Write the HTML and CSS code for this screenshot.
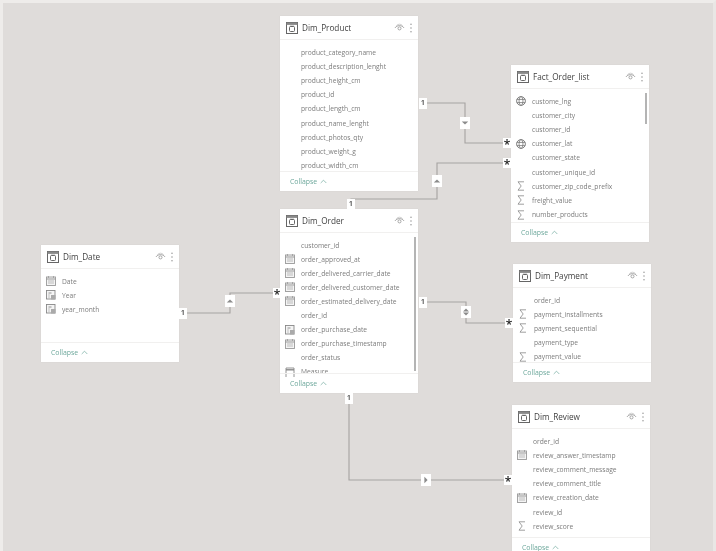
FILE: index.html
```html
<!DOCTYPE html>
<html lang="en">
<head>
<meta charset="utf-8">
<title>Model view</title>
<link rel="stylesheet" href="styles.css">
</head>
<body>
<svg class="defs" width="0" height="0" aria-hidden="true">
  <symbol id="i-table" viewBox="0 0 12 12">
    <rect x="0.5" y="0.5" width="11" height="11" fill="none" stroke="#666" stroke-width="1"/>
    <rect x="0.5" y="0.5" width="11" height="2.4" fill="#888"/>
    <rect x="3.5" y="4.5" width="5" height="5" rx="1" fill="none" stroke="#666" stroke-width="1"/>
    <path d="M5 3.4v1.6M7 3.4v1.6" stroke="#666" stroke-width=".8"/>
  </symbol>
  <symbol id="i-eye" viewBox="0 0 12 10">
    <path d="M1 5.5C3 2 9 2 11 5.5" fill="none" stroke="#888" stroke-width=".8"/>
    <path d="M2.5 3C4.5 0.8 7.5 0.8 9.5 3" fill="none" stroke="#aaa" stroke-width=".6"/>
    <circle cx="6" cy="6" r="1.7" fill="none" stroke="#888" stroke-width=".8"/>
  </symbol>
  <symbol id="i-more" viewBox="0 0 4 12">
    <circle cx="2" cy="1.5" r=".8" fill="#888"/>
    <circle cx="2" cy="6" r=".8" fill="#888"/>
    <circle cx="2" cy="10.5" r=".8" fill="#888"/>
  </symbol>
  <symbol id="i-sum" viewBox="0 0 10 10">
    <path d="M8 .8H2l3.2 4.2L2 9.2h6" fill="none" stroke="#888" stroke-width=".8"/>
  </symbol>
  <symbol id="i-globe" viewBox="0 0 10 10">
    <circle cx="5" cy="5" r="4.4" fill="none" stroke="#777" stroke-width=".9"/>
    <ellipse cx="5" cy="5" rx="2" ry="4.4" fill="none" stroke="#777" stroke-width=".8"/>
    <path d="M.8 3.4h8.4M.8 6.6h8.4" stroke="#777" stroke-width=".8"/>
  </symbol>
  <symbol id="i-cal" viewBox="0 0 10 10">
    <rect x=".5" y="1" width="9" height="8.5" fill="#f4f4f4" stroke="#999" stroke-width=".9"/>
    <path d="M.5 3h9" stroke="#999" stroke-width="1"/>
    <path d="M2.5 0v2M7.5 0v2" stroke="#999" stroke-width=".8"/>
    <path d="M2 5h6M2 7h6" stroke="#bbb" stroke-width="1"/>
  </symbol>
  <symbol id="i-hier" viewBox="0 0 10 10">
    <rect x=".5" y=".5" width="8.5" height="8.5" fill="#f4f4f4" stroke="#888" stroke-width=".9"/>
    <path d="M2.5 3h3M2.5 5h1M2.5 7h1" stroke="#888" stroke-width=".9"/>
    <rect x="5" y="5" width="4.5" height="4.5" fill="#aaa"/>
  </symbol>
  <symbol id="i-measure" viewBox="0 0 10 10">
    <path d="M1 10V1h8v9" fill="none" stroke="#888" stroke-width=".9"/>
    <path d="M1 2.8h8" stroke="#888" stroke-width="1.4"/>
  </symbol>
  <symbol id="i-chev" viewBox="0 0 8 5">
    <path d="M.8 4.2L4 1l3.2 3.2" fill="none" stroke="#6ea89c" stroke-width=".8"/>
  </symbol>
</svg>

<main class="canvas">
  <svg class="links" width="716" height="551" viewBox="0 0 716 551" aria-hidden="true">
    <path d="M423 103H465V143H507"/>
    <path d="M507 163H437V199H351V205"/>
    <path d="M183 313H230V293H277"/>
    <path d="M423 302H466V323H509"/>
    <path d="M349 398V480H508"/>
  </svg>

  <section class="card c-product">
    <header class="head"><svg class="ticon"><use href="#i-table"/></svg><h2>Dim_Product</h2><svg class="eye"><use href="#i-eye"/></svg><svg class="more"><use href="#i-more"/></svg></header>
    <ul class="rows">
      <li><span class="ic"></span>product_category_name</li>
      <li><span class="ic"></span>product_description_lenght</li>
      <li><span class="ic"></span>product_height_cm</li>
      <li><span class="ic"></span>product_id</li>
      <li><span class="ic"></span>product_length_cm</li>
      <li><span class="ic"></span>product_name_lenght</li>
      <li><span class="ic"></span>product_photos_qty</li>
      <li><span class="ic"></span>product_weight_g</li>
      <li><span class="ic"></span>product_width_cm</li>
    </ul>
    <footer class="foot">Collapse <svg class="chev"><use href="#i-chev"/></svg></footer>
  </section>

  <section class="card c-fact">
    <header class="head"><svg class="ticon"><use href="#i-table"/></svg><h2>Fact_Order_list</h2><svg class="eye"><use href="#i-eye"/></svg><svg class="more"><use href="#i-more"/></svg></header>
    <ul class="rows">
      <li><svg class="ic"><use href="#i-globe"/></svg>custome_lng</li>
      <li><span class="ic"></span>customer_city</li>
      <li><span class="ic"></span>customer_id</li>
      <li><svg class="ic"><use href="#i-globe"/></svg>customer_lat</li>
      <li><span class="ic"></span>customer_state</li>
      <li><span class="ic"></span>customer_unique_id</li>
      <li><svg class="ic"><use href="#i-sum"/></svg>customer_zip_code_prefix</li>
      <li><svg class="ic"><use href="#i-sum"/></svg>freight_value</li>
      <li><svg class="ic"><use href="#i-sum"/></svg>number_products</li>
    </ul>
    <div class="scroll"></div>
    <footer class="foot">Collapse <svg class="chev"><use href="#i-chev"/></svg></footer>
  </section>

  <section class="card c-order">
    <header class="head"><svg class="ticon"><use href="#i-table"/></svg><h2>Dim_Order</h2><svg class="eye"><use href="#i-eye"/></svg><svg class="more"><use href="#i-more"/></svg></header>
    <ul class="rows">
      <li><span class="ic"></span>customer_id</li>
      <li><svg class="ic"><use href="#i-cal"/></svg>order_approved_at</li>
      <li><svg class="ic"><use href="#i-cal"/></svg>order_delivered_carrier_date</li>
      <li><svg class="ic"><use href="#i-cal"/></svg>order_delivered_customer_date</li>
      <li><svg class="ic"><use href="#i-cal"/></svg>order_estimated_delivery_date</li>
      <li><span class="ic"></span>order_id</li>
      <li><svg class="ic"><use href="#i-hier"/></svg>order_purchase_date</li>
      <li><svg class="ic"><use href="#i-cal"/></svg>order_purchase_timestamp</li>
      <li><span class="ic"></span>order_status</li>
      <li><svg class="ic"><use href="#i-measure"/></svg>Measure</li>
    </ul>
    <div class="scroll"></div>
    <footer class="foot">Collapse <svg class="chev"><use href="#i-chev"/></svg></footer>
  </section>

  <section class="card c-date">
    <header class="head"><svg class="ticon"><use href="#i-table"/></svg><h2>Dim_Date</h2><svg class="eye"><use href="#i-eye"/></svg><svg class="more"><use href="#i-more"/></svg></header>
    <ul class="rows">
      <li><svg class="ic"><use href="#i-cal"/></svg>Date</li>
      <li><svg class="ic"><use href="#i-hier"/></svg>Year</li>
      <li><svg class="ic"><use href="#i-hier"/></svg>year_month</li>
    </ul>
    <footer class="foot">Collapse <svg class="chev"><use href="#i-chev"/></svg></footer>
  </section>

  <section class="card c-payment">
    <header class="head"><svg class="ticon"><use href="#i-table"/></svg><h2>Dim_Payment</h2><svg class="eye"><use href="#i-eye"/></svg><svg class="more"><use href="#i-more"/></svg></header>
    <ul class="rows">
      <li><span class="ic"></span>order_id</li>
      <li><svg class="ic"><use href="#i-sum"/></svg>payment_installments</li>
      <li><svg class="ic"><use href="#i-sum"/></svg>payment_sequential</li>
      <li><span class="ic"></span>payment_type</li>
      <li><svg class="ic"><use href="#i-sum"/></svg>payment_value</li>
    </ul>
    <footer class="foot">Collapse <svg class="chev"><use href="#i-chev"/></svg></footer>
  </section>

  <section class="card c-review">
    <header class="head"><svg class="ticon"><use href="#i-table"/></svg><h2>Dim_Review</h2><svg class="eye"><use href="#i-eye"/></svg><svg class="more"><use href="#i-more"/></svg></header>
    <ul class="rows">
      <li><span class="ic"></span>order_id</li>
      <li><svg class="ic"><use href="#i-cal"/></svg>review_answer_timestamp</li>
      <li><span class="ic"></span>review_comment_message</li>
      <li><span class="ic"></span>review_comment_title</li>
      <li><svg class="ic"><use href="#i-cal"/></svg>review_creation_date</li>
      <li><span class="ic"></span>review_id</li>
      <li><svg class="ic"><use href="#i-sum"/></svg>review_score</li>
    </ul>
    <footer class="foot">Collapse <svg class="chev"><use href="#i-chev"/></svg></footer>
  </section>

  <span class="badge b1 p1">1</span>
  <span class="badge b1 p2">1</span>
  <span class="badge b1 p3">1</span>
  <span class="badge b1 p4">1</span>
  <span class="badge b1 p5">1</span>
  <span class="badge bs s1">*</span>
  <span class="badge bs s2">*</span>
  <span class="badge bs s3">*</span>
  <span class="badge bs s4">*</span>
  <span class="badge bs s5">*</span>
  <span class="badge ba a1"><svg viewBox="0 0 8 8"><path d="M.8 2.4h6.4L4 5.6z"/></svg></span>
  <span class="badge ba a2"><svg viewBox="0 0 8 8"><path d="M.8 5.6h6.4L4 2.4z"/></svg></span>
  <span class="badge ba a3"><svg viewBox="0 0 8 8"><path d="M.8 5.6h6.4L4 2.4z"/></svg></span>
  <span class="badge ba a4"><svg viewBox="0 0 8 8"><path d="M1 3.4h6L4 .6zM1 4.6h6L4 7.4z"/></svg></span>
  <span class="badge ba a5"><svg viewBox="0 0 8 8"><path d="M2.4 .8v6.4L5.6 4z"/></svg></span>
</main>
</body>
</html>
```
FILE: styles.css
```css
* { box-sizing: border-box; }
html, body { margin: 0; height: 100%; background: #fff; overflow: hidden; }
.defs { position: absolute; }
.canvas {
  position: relative;
  width: 716px;
  height: 551px;
  background: #dfdcda;
  border-top: 3px solid #eeecea;
  border-left: 3px solid #eeecea;
  border-right: 3px solid #e9e7e5;
  font-family: "Open Sans", "Noto Sans", sans-serif;
  overflow: hidden;
  filter: blur(0.55px);
}
.links { position: absolute; left: -3px; top: -3px; }
.links path { fill: none; stroke: #a5a3a1; stroke-width: 1.1; }

.card {
  position: absolute;
  width: 138px;
  background: #fff;
  display: flex;
  flex-direction: column;
  box-shadow: 0 0 1px rgba(0,0,0,.08);
}
.c-product { left: 277px; top: 13px; height: 175px; }
.c-fact    { left: 508px; top: 62px; height: 177px; }
.c-order   { left: 277px; top: 206px; height: 184px; }
.c-date    { left: 38px;  top: 242px; height: 117px; }
.c-payment { left: 510px; top: 261px; height: 118px; }
.c-review  { left: 509px; top: 402px; height: 152px; }

.head {
  height: 24px;
  flex: none;
  display: flex;
  align-items: center;
  padding: 0 5px 0 6px;
  border-bottom: 1px solid #f1f0ef;
}
.head h2 {
  margin: 0 0 0 4px;
  flex: 1;
  font-size: 8.2px;
  font-weight: 400;
  color: #3f3f3f;
}
.ticon { width: 12px; height: 12px; flex: none; }
.eye { width: 11px; height: 9px; flex: none; }
.more { width: 4px; height: 10px; flex: none; margin-left: 4px; }

.rows {
  list-style: none;
  margin: 0;
  padding: 5px 0 0 5px;
  flex: 1;
  min-height: 0;
}
.rows li {
  height: 14.2px;
  display: flex;
  align-items: center;
  font-size: 6.7px;
  color: #7c7c7c;
  white-space: nowrap;
}
.c-order .rows li { height: 14.1px; }
.ic { width: 10px; height: 10px; flex: none; margin-right: 6px; }

.scroll {
  position: absolute;
  right: 2px;
  width: 2px;
  background: #b4b4b4;
}
.c-fact .scroll { top: 28px; height: 31px; }
.c-order .scroll { top: 28px; height: 134px; }

.foot {
  height: 20px;
  flex: none;
  display: flex;
  align-items: center;
  gap: 3px;
  padding-left: 10px;
  border-top: 1px solid #f1f0ef;
  font-size: 6.9px;
  color: #6ea89c;
}
.chev { width: 7px; height: 5px; }

.badge {
  position: absolute;
  background: #fff;
  display: flex;
  align-items: center;
  justify-content: center;
  color: #444;
  font-weight: 600;
  line-height: 1;
}
.b1 { width: 8px; height: 11px; font-size: 7.5px; }
.bs { width: 9px; height: 10px; font-size: 12px; color: #222; padding-top: 4px; }
.ba { width: 10px; height: 12px; }
.ba svg { width: 8px; height: 8px; fill: #8b8b8b; }

.p1 { left: 416px; top: 94.5px; }
.p2 { left: 344px; top: 195.5px; }
.p3 { left: 176px; top: 304.5px; }
.p4 { left: 416px; top: 293.5px; }
.p5 { left: 342px; top: 389.5px; }

.s1 { left: 499.5px; top: 135px; }
.s2 { left: 499.5px; top: 155px; }
.s3 { left: 269.5px; top: 285px; }
.s4 { left: 501.5px; top: 315px; }
.s5 { left: 500.5px; top: 472px; }

.a1 { left: 457px; top: 114px; }
.a2 { left: 429px; top: 172px; }
.a3 { left: 222px; top: 292px; }
.a4 { left: 458px; top: 303px; }
.a5 { left: 418px; top: 471px; }
```
